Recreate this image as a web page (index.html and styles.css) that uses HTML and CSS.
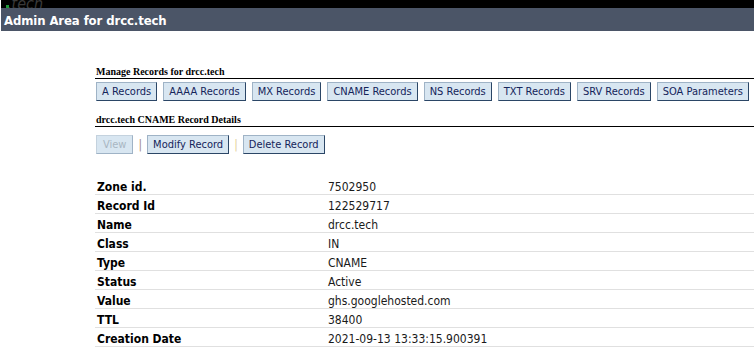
FILE: index.html
```html
<!DOCTYPE html>
<html lang="en">
<head>
  <meta charset="UTF-8" />
  <title>Admin Area for drcc.tech</title>
  <link rel="stylesheet" href="styles.css">
</head>
<body>

<div id="top-strip">
  <span class="dot"></span><span class="brand">.tech</span>
</div>
<div id="title-bar">Admin Area for drcc.tech</div>

<div id="content">
  <div class="section-title">Manage Records for drcc.tech</div>
  <div class="btn-row">
    <button class="btn">A Records</button>
    <button class="btn">AAAA Records</button>
    <button class="btn">MX Records</button>
    <button class="btn">CNAME Records</button>
    <button class="btn">NS Records</button>
    <button class="btn">TXT Records</button>
    <button class="btn">SRV Records</button>
    <button class="btn">SOA Parameters</button>
  </div>

  <div class="section-title second">drcc.tech CNAME Record Details</div>
  <div class="btn-row actions">
    <button class="btn view-btn" disabled>View</button>
    <span class="sep sep-a">|</span>
    <button class="btn">Modify Record</button>
    <span class="sep sep-b">|</span>
    <button class="btn">Delete Record</button>
  </div>

  <!-- record details -->
  <table class="details">
    <tr><th>Zone id.</th><td>7502950</td></tr>
    <tr><th>Record Id</th><td>122529717</td></tr>
    <tr><th>Name</th><td>drcc.tech</td></tr>
    <tr><th>Class</th><td>IN</td></tr>
    <tr><th>Type</th><td>CNAME</td></tr>
    <tr><th>Status</th><td>Active</td></tr>
    <tr><th>Value</th><td>ghs.googlehosted.com</td></tr>
    <tr><th>TTL</th><td>38400</td></tr>
    <tr><th>Creation Date</th><td>2021-09-13 13:33:15.900391</td></tr>
  </table>
</div>

</body>
</html>
```

FILE: styles.css
```css
body {
  font-family: "DejaVu Sans Condensed", "DejaVu Sans", sans-serif;
  font-stretch: condensed;
  margin: 0;
  padding: 0 0 0 1px;
  background: white;
  overflow: hidden;
}

#top-strip {
  height: 8px;
  background: #000;
  overflow: hidden;
  position: relative;
}

#top-strip .brand {
  display: block;
  height: 8px;
  margin-left: 6px;
  font-family: "DejaVu Sans", sans-serif;
  font-style: italic;
  font-size: 16px;
  line-height: 8px;
  color: #3a3a3a;
  overflow: hidden;
}

#top-strip .dot {
  position: absolute;
  left: 5px;
  top: 5px;
  width: 3px;
  height: 3px;
  background: #1f9a3a;
}

#title-bar {
  height: 23px;
  background: #4b5567;
  color: white;
  font-weight: bold;
  font-size: 13px;
  letter-spacing: -0.1px;
  line-height: 25px;
  padding-left: 3px;
}

#content {
  margin-left: 94px;
}

.section-title {
  font-family: "Liberation Serif", serif;
  font-weight: bold;
  font-size: 10px;
  line-height: 12px;
  color: #000;
  padding-left: 1px;
  border-bottom: 1px solid #000;
  margin-top: 35px;
}

.section-title.second {
  margin-top: 13px;
}

.btn-row {
  display: flex;
  align-items: center;
  gap: 6px;
  margin-top: 3px;
  padding-left: 1px;
}

.btn {
  font-family: "DejaVu Sans Condensed", "DejaVu Sans", sans-serif;
  font-stretch: condensed;
  font-size: 11px;
  height: 19px;
  padding: 0 5px;
  margin: 0;
  background: #d8e6f1;
  color: #14245a;
  border: 1px solid;
  border-color: #9fb3c6 #2b4666 #2b4666 #9fb3c6;
  border-radius: 0;
  white-space: nowrap;
}

.btn:disabled {
  color: #a9b6c2;
  border-color: #c4d2de #9fb3c6 #9fb3c6 #c4d2de;
}

.actions {
  margin-top: 8px;
  gap: 5px;
}

.view-btn {
  padding: 0 6px;
}

.sep {
  font-size: 12px;
  color: #a08a7c;
}

.sep-b {
  color: #e2cf9c;
}

.details {
  border-collapse: collapse;
  width: 100%;
  margin-top: 22px;
  font-size: 12px;
}

.details th,
.details td {
  text-align: left;
  vertical-align: bottom;
  height: 18px;
  line-height: 14px;
  padding: 0 0 0 2px;
  border-bottom: 1px solid #e0e0e0;
  color: #000;
}

.details th {
  width: 229px;
  font-weight: bold;
}

.details td {
  color: #1a1a1a;
}
```
